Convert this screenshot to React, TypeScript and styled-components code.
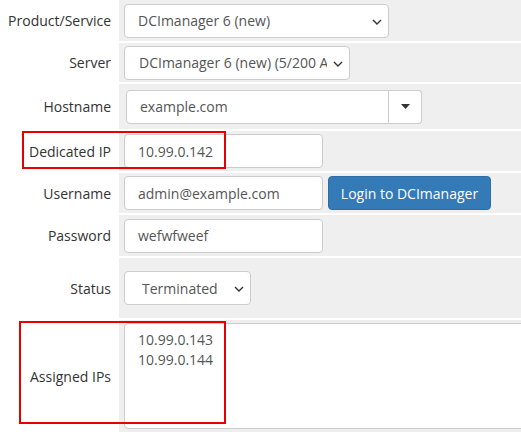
import styled, { createGlobalStyle } from "styled-components";

const GlobalStyle = createGlobalStyle`
  html, body {
    margin: 0;
    padding: 0;
    background: #ffffff;
    overflow: hidden;
  }
  body {
    font-family: "Open Sans", "Liberation Sans", sans-serif;
    font-size: 14px;
    color: #333333;
  }
`;

const Page = styled.div`
  position: relative;
  width: 521px;
  height: 439px;
  overflow: hidden;
`;

const Form = styled.div`
  display: flex;
  flex-direction: column;
  gap: 2px;
`;

const Row = styled.div<{ $h: number }>`
  display: flex;
  height: ${(p) => p.$h}px;
`;

const Label = styled.div`
  width: 119px;
  flex: none;
  box-sizing: border-box;
  padding-right: 8px;
  display: flex;
  align-items: center;
  justify-content: flex-end;
  background: #ffffff;
  color: #333333;
  white-space: nowrap;
`;

const Field = styled.div<{ $top?: boolean; $indent?: number }>`
  flex: 1;
  display: flex;
  align-items: ${(p) => (p.$top ? "flex-start" : "center")};
  gap: 5px;
  padding-left: ${(p) => p.$indent ?? 5}px;
  padding-top: ${(p) => (p.$top ? 3 : 0)}px;
  background: #efefef;
  overflow: hidden;
`;

const Control = styled.div<{ $w: number; $pad?: number }>`
  position: relative;
  box-sizing: border-box;
  width: ${(p) => p.$w}px;
  height: 34px;
  flex: none;
  display: flex;
  align-items: center;
  padding-left: ${(p) => p.$pad ?? 13}px;
  background: #ffffff;
  border: 1px solid #cccccc;
  border-radius: 4px;
  color: #555555;
  white-space: nowrap;
`;

const SelectText = styled.span<{ $clip: number }>`
  display: block;
  overflow: hidden;
  width: ${(p) => p.$clip}px;
`;

const Chevron = styled.svg`
  position: absolute;
  right: 6px;
  top: 14px;
`;

const InputGroup = styled.div`
  display: flex;
  height: 34px;
  box-sizing: border-box;
`;

const GroupInput = styled(Control)`
  border-radius: 4px 0 0 4px;
`;

const GroupButton = styled.div`
  box-sizing: border-box;
  width: 33px;
  height: 34px;
  display: flex;
  align-items: center;
  justify-content: center;
  background: #ffffff;
  border: 1px solid #cccccc;
  border-left: none;
  border-radius: 0 4px 4px 0;
`;

const PrimaryButton = styled.div`
  box-sizing: border-box;
  width: 163px;
  height: 34px;
  display: flex;
  align-items: center;
  justify-content: center;
  background: #337ab7;
  border: 1px solid #2e6da4;
  border-radius: 4px;
  color: #ffffff;
  white-space: nowrap;
`;

const TextArea = styled.div`
  box-sizing: border-box;
  width: 420px;
  height: 106px;
  flex: none;
  padding: 6px 13px;
  background: #ffffff;
  border: 1px solid #cccccc;
  border-radius: 4px;
  color: #555555;
  line-height: 20px;
`;

const Highlight = styled.div<{ $x: number; $y: number; $w: number; $h: number }>`
  position: absolute;
  left: ${(p) => p.$x}px;
  top: ${(p) => p.$y}px;
  width: ${(p) => p.$w}px;
  height: ${(p) => p.$h}px;
  box-sizing: border-box;
  border: 2px solid #e60000;
  pointer-events: none;
`;

const Down = () => (
  <Chevron width="10" height="6" viewBox="0 0 10 6">
    <polyline points="1,1 5,5 9,1" fill="none" stroke="#333" strokeWidth="1.4" />
  </Chevron>
);

const Caret = () => (
  <svg width="9" height="5" viewBox="0 0 9 5">
    <polygon points="0,0 9,0 4.5,5" fill="#333" />
  </svg>
);

export default function App() {
  return (
    <Page>
      <GlobalStyle />
      <Form>
        <Row $h={41}>
          <Label>Product/Service</Label>
          <Field>
            <Control $w={265}>
              <SelectText $clip={220}>DCImanager 6 (new)</SelectText>
              <Down />
            </Control>
          </Field>
        </Row>
        <Row $h={39}>
          <Label>Server</Label>
          <Field>
            <Control $w={226} $pad={14}>
              <SelectText $clip={188}>DCImanager 6 (new) (5/200 Accounts)</SelectText>
              <Down />
            </Control>
          </Field>
        </Row>
        <Row $h={45}>
          <Label>Hostname</Label>
          <Field $indent={7}>
            <InputGroup>
              <GroupInput $w={263}>example.com</GroupInput>
              <GroupButton>
                <Caret />
              </GroupButton>
            </InputGroup>
          </Field>
        </Row>
        <Row $h={40}>
          <Label>Dedicated IP</Label>
          <Field>
            <Control $w={199}>10.99.0.142</Control>
          </Field>
        </Row>
        <Row $h={40}>
          <Label>Username</Label>
          <Field>
            <Control $w={199}>admin@example.com</Control>
            <PrimaryButton>Login to DCImanager</PrimaryButton>
          </Field>
        </Row>
        <Row $h={41}>
          <Label>Password</Label>
          <Field>
            <Control $w={199}>wefwfweef</Control>
          </Field>
        </Row>
        <Row $h={60}>
          <Label>Status</Label>
          <Field>
            <Control $w={127} $pad={17}>
              <SelectText $clip={90}>Terminated</SelectText>
              <Down />
            </Control>
          </Field>
        </Row>
        <Row $h={112}>
          <Label>Assigned IPs</Label>
          <Field $top>
            <TextArea>
              10.99.0.143
              <br />
              10.99.0.144
            </TextArea>
          </Field>
        </Row>
      </Form>
      <Highlight $x={22} $y={131} $w={204} $h={38} />
      <Highlight $x={19} $y={321} $w={207} $h={103} />
    </Page>
  );
}
